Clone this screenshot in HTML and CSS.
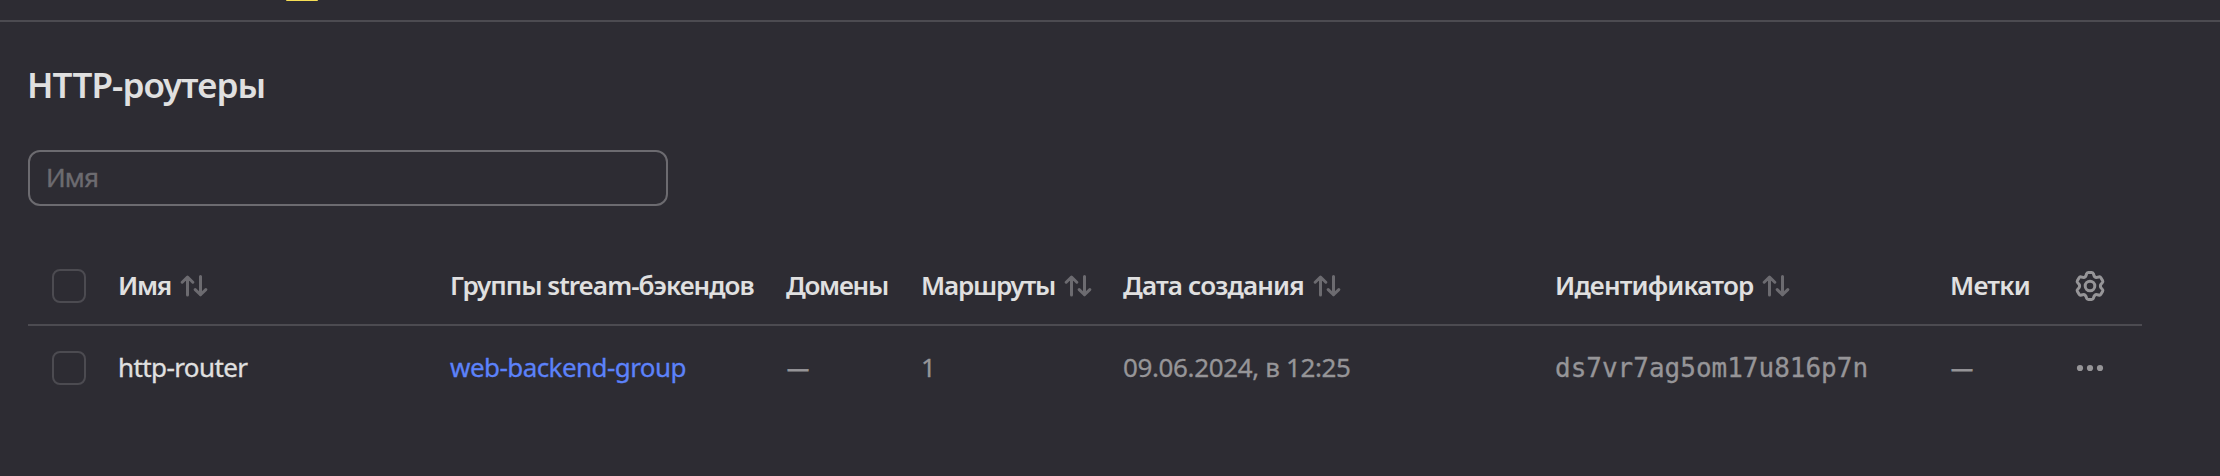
FILE: index.html
```
<!DOCTYPE html>
<html lang="ru">
<head>
<meta charset="utf-8">
<title>HTTP-роутеры</title>
<link rel="stylesheet" href="styles.css">
</head>
<body>
<svg class="defs" width="0" height="0" aria-hidden="true">
  <symbol id="sort" viewBox="0 0 28 22">
    <path d="M7.5 20V2.2M2.2 7.2L7.5 2L12.8 7.2M20.5 1.6V19.8M15.2 14.6L20.5 19.8L25.8 14.6"/>
  </symbol>
  <symbol id="gear" viewBox="-16 -16 32 32">
    <g id="tooth-pair">
      <path id="tooth" d="M-5.2-9Q-4.3-9.5-3.9-10.6L-3.5-12Q-3.1-13.6-1.8-13.6H1.8Q3.1-13.6 3.5-12L3.9-10.6Q4.3-9.5 5.2-9"/>
      <use href="#tooth" transform="rotate(180)"/>
    </g>
    <use href="#tooth-pair" transform="rotate(60)"/>
    <use href="#tooth-pair" transform="rotate(120)"/>
    <circle r="4.8"/>
  </symbol>
</svg>

<header class="topbar"><span class="active-tab"></span></header>

<main class="page">
  <h1 class="title">HTTP-роутеры</h1>
  <input class="filter" type="text" placeholder="Имя">

  <div class="table">
    <div class="row head">
      <div class="cell check"><span class="checkbox"></span></div>
      <div class="cell"><span class="t-name">Имя</span><svg class="sort"><use href="#sort"/></svg></div>
      <div class="cell"><span class="t-groups">Группы stream-бэкендов</span></div>
      <div class="cell"><span class="t-domains">Домены</span></div>
      <div class="cell"><span class="t-routes">Маршруты</span><svg class="sort"><use href="#sort"/></svg></div>
      <div class="cell"><span class="t-date">Дата создания</span><svg class="sort"><use href="#sort"/></svg></div>
      <div class="cell"><span class="t-id">Идентификатор</span><svg class="sort"><use href="#sort"/></svg></div>
      <div class="cell"><span class="t-labels">Метки</span></div>
      <div class="cell"><svg class="gear"><use href="#gear"/></svg></div>
    </div>
    <div class="row body">
      <div class="cell check"><span class="checkbox"></span></div>
      <div class="cell"><span class="v-name">http-router</span></div>
      <div class="cell"><a class="link">web-backend-group</a></div>
      <div class="cell muted"><span class="dash">—</span></div>
      <div class="cell muted"><span>1</span></div>
      <div class="cell muted"><span class="v-date">09.06.2024, в 12:25</span></div>
      <div class="cell muted"><span class="mono">ds7vr7ag5om17u816p7n</span></div>
      <div class="cell muted"><span class="dash">—</span></div>
      <div class="cell"><svg class="more" viewBox="0 0 32 8"><circle cx="6" cy="4" r="3.1"/><circle cx="16" cy="4" r="3.1"/><circle cx="26" cy="4" r="3.1"/></svg></div>
    </div>
  </div>
</main>
</body>
</html>
```
FILE: styles.css
```
* { box-sizing: border-box; }
body {
  margin: 0;
  height: 476px;
  overflow: hidden;
  background: #2d2c33;
  color: #e0e0e0;
  font: 400 26px/36px "Noto Sans", sans-serif;
}
.defs { display: block; }
.topbar {
  height: 22px;
  padding-left: 286px;
  border-bottom: 2px solid #4c4b51;
}
.active-tab {
  display: block;
  width: 32px;
  height: 1px;
  border-radius: 0 0 1px 1px;
  background: #f6de55;
}
.page { padding: 43px 78px 0 28px; }
.title {
  margin: 0 0 45px -1px;
  height: 40px;
  font-size: 35px;
  line-height: 40px;
  font-weight: 600;
  letter-spacing: -.85px;
}
.filter {
  display: block;
  width: 640px;
  height: 56px;
  padding: 0 16px 2px;
  border: 2px solid #6c6b70;
  border-radius: 12px;
  outline: 0;
  background: transparent;
  color: inherit;
  font: inherit;
  letter-spacing: -.8px;
  -webkit-text-stroke: .4px;
}
.filter::placeholder { color: #6c6b70; opacity: 1; }

.table { margin-top: 42px; }
.row {
  display: grid;
  grid-template-columns: 90px 332px 336px 135px 202px 432px 395px 124px 1fr;
}
.head {
  height: 78px;
  border-bottom: 2px solid #4c4b51;
  font-weight: 600;
}
.body {
  height: 84px;
  -webkit-text-stroke: .3px;
}
.cell {
  display: flex;
  align-items: center;
  white-space: nowrap;
}
.check { padding-left: 24px; }
.checkbox {
  width: 34px;
  height: 34px;
  border: 2px solid #4c4b51;
  border-radius: 8px;
}
.cell > span:not(.checkbox), .link { padding-bottom: 2px; }
.muted { color: #969598; }
.link { color: #5c82fa; letter-spacing: -.56px; }
.cell > span.mono { padding: 0; font: 26px/36px "DejaVu Sans Mono", monospace; }
.dash { font-size: 22px; margin-left: 1px; -webkit-text-stroke: .8px; }

.t-name { letter-spacing: -1.3px; }
.t-groups { letter-spacing: -.95px; }
.t-domains { letter-spacing: -1.25px; }
.t-routes { letter-spacing: -1.15px; }
.t-date, .t-id { letter-spacing: -.83px; }
.t-labels { letter-spacing: -.75px; }
.v-name { letter-spacing: -.6px; }
.v-date { letter-spacing: -.37px; }

.sort, .gear { fill: none; stroke-linecap: round; stroke-linejoin: round; }
.sort {
  width: 28px;
  height: 22px;
  margin-left: 9px;
  stroke: #6c6b70;
  stroke-width: 3;
}
.gear {
  width: 32px;
  height: 32px;
  stroke: #969598;
  stroke-width: 3;
}
.more { width: 32px; height: 8px; fill: #969598; }
```
